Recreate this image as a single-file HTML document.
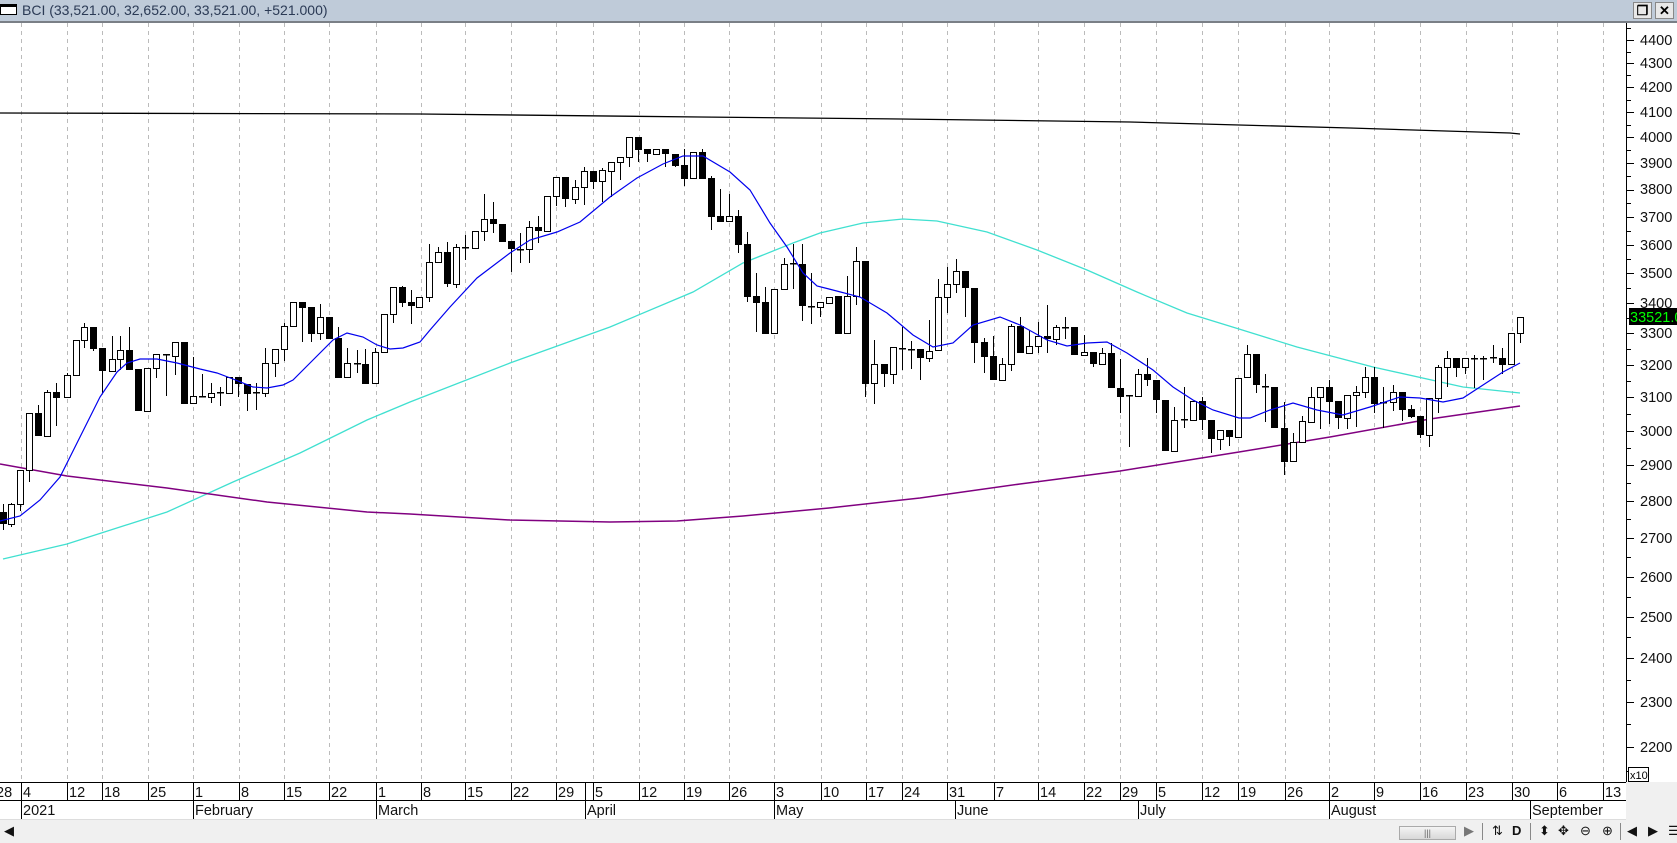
<!DOCTYPE html>
<html><head><meta charset="utf-8"><style>
html,body{margin:0;padding:0;width:1677px;height:843px;overflow:hidden;background:#fff;font-family:"Liberation Sans",Arial,sans-serif}
#title{position:absolute;left:0;top:0;width:1677px;height:21px;background:#bfcbd9;border-bottom:2px solid #7a7f86;box-sizing:content-box}
#title .t{position:absolute;left:22px;top:2px;font-size:14px;color:#2b3a55;white-space:nowrap}
#title .ic{position:absolute;left:0;top:4px;width:17px;height:11px;border:1px solid #000;border-top:3px solid #000;background:#fff;box-sizing:border-box}
.btn{position:absolute;top:2px;width:19px;height:17px;background:#e8e8e8;border:1px solid #888;box-sizing:border-box;font-size:13px;text-align:center;line-height:15px;font-weight:bold}
svg{position:absolute;left:0;top:0}
.yl{font-size:14.5px;fill:#111}
.dl{font-size:14.5px;fill:#111}
#bar{position:absolute;left:0;top:820px;width:1677px;height:23px;background:#f0f0f0}
.ico{position:absolute;top:3px;font-size:13px;color:#111}
</style></head><body>
<div id="title"><div class="ic"></div><div class="t">BCI (33,521.00, 32,652.00, 33,521.00, +521.000)</div>
<div class="btn" style="left:1633px">&#x2750;</div><div class="btn" style="left:1655px">✕</div></div>
<svg width="1677" height="843" xmlns="http://www.w3.org/2000/svg" style="top:0" id="s">
<rect x="0" y="23" width="1626" height="759" fill="#fff"/>
<g id="grid" stroke="#bbb" stroke-width="1" stroke-dasharray="4,4" shape-rendering="crispEdges"></g>
<polyline fill="none" stroke="#000" stroke-width="1.3" points="0,113 420,114 700,117 900,119 1130,122 1350,128 1510,133 1520,134"/>
<polyline fill="none" stroke="#40e0d0" stroke-width="1.3" points="3,559 67,544 167,512 233,482 300,453 367,420 410,402 510,363 610,327 693,292 743,263 793,243 820,233 863,223 903,219 937,221 987,232 1037,250 1087,270 1137,292 1187,313 1239,329 1297,347 1373,367 1463,387 1520,393"/>
<polyline fill="none" stroke="#800080" stroke-width="1.5" points="0,464 67,476 167,488 267,502 367,512 410,514 510,520 610,522 677,521 743,516 829,508 920,498 1020,484 1120,471 1239,452 1330,437 1430,419 1520,406"/>
<g id="candles" shape-rendering="crispEdges"></g>
<polyline fill="none" stroke="#0000ee" stroke-width="1.2" points="0,521 20,516 40,500 60,477 80,437 100,397 117,372 127,363 140,359 157,359 177,363 200,369 217,373 233,379 253,387 267,388 283,385 293,380 310,363 333,340 347,333 363,337 377,345 390,349 403,348 420,342 430,330 450,307 477,278 510,253 530,240 557,232 580,222 610,197 637,178 663,164 683,156 703,156 730,172 750,190 770,223 787,247 803,273 817,286 829,289 860,297 887,313 913,335 933,347 953,343 973,325 1000,317 1020,325 1047,340 1067,346 1087,343 1107,342 1127,353 1153,370 1173,387 1193,400 1213,410 1239,418 1250,418 1270,410 1293,403 1317,410 1343,415 1370,407 1400,397 1420,398 1443,402 1463,398 1483,385 1503,372 1520,363"/>
<line x1="1626.5" y1="23" x2="1626.5" y2="782" stroke="#000"/>
<g id="ticks" stroke="#000" shape-rendering="crispEdges"></g>
<g class="yl">
<text x="1640" y="45">4400</text><text x="1640" y="68">4300</text><text x="1640" y="92">4200</text><text x="1640" y="117">4100</text><text x="1640" y="142">4000</text><text x="1640" y="168">3900</text><text x="1640" y="194">3800</text><text x="1640" y="222">3700</text><text x="1640" y="250">3600</text><text x="1640" y="278">3500</text><text x="1640" y="308">3400</text><text x="1640" y="338">3300</text><text x="1640" y="370">3200</text><text x="1640" y="402">3100</text><text x="1640" y="436">3000</text><text x="1640" y="470">2900</text><text x="1640" y="506">2800</text><text x="1640" y="543">2700</text><text x="1640" y="582">2600</text><text x="1640" y="622">2500</text><text x="1640" y="663">2400</text><text x="1640" y="707">2300</text><text x="1640" y="752">2200</text>
</g>
<rect x="1629" y="308" width="48" height="17" fill="#000"/>
<text x="1630" y="322" font-size="14.5" fill="#00ff00">33521.0</text>
<rect x="1628.5" y="767.5" width="20" height="14" fill="#fff" stroke="#000"/>
<text x="1630" y="779" font-size="11" fill="#000">x10</text>
<rect x="1626" y="782" width="51" height="38" fill="#f0f0f0"/>
<line x1="0" y1="782.5" x2="1626" y2="782.5" stroke="#000"/>
<line x1="0" y1="800.5" x2="1626" y2="800.5" stroke="#000"/>
<line x1="0" y1="819.5" x2="1626" y2="819.5" stroke="#ddd"/>
<g id="dt" stroke="#000" shape-rendering="crispEdges"></g>
<g class="dl">
<text x="-4" y="797">28</text><text x="23" y="797">4</text><text x="69" y="797">12</text><text x="104" y="797">18</text><text x="150" y="797">25</text><text x="195" y="797">1</text><text x="241" y="797">8</text><text x="286" y="797">15</text><text x="331" y="797">22</text><text x="378" y="797">1</text><text x="423" y="797">8</text><text x="467" y="797">15</text><text x="513" y="797">22</text><text x="558" y="797">29</text><text x="595" y="797">5</text><text x="641" y="797">12</text><text x="686" y="797">19</text><text x="731" y="797">26</text><text x="776" y="797">3</text><text x="823" y="797">10</text><text x="868" y="797">17</text><text x="904" y="797">24</text><text x="949" y="797">31</text><text x="996" y="797">7</text><text x="1040" y="797">14</text><text x="1086" y="797">22</text><text x="1122" y="797">29</text><text x="1158" y="797">5</text><text x="1204" y="797">12</text><text x="1240" y="797">19</text><text x="1287" y="797">26</text><text x="1331" y="797">2</text><text x="1376" y="797">9</text><text x="1422" y="797">16</text><text x="1468" y="797">23</text><text x="1514" y="797">30</text><text x="1559" y="797">6</text><text x="1605" y="797">13</text>
<text x="23" y="815">2021</text><text x="195" y="815">February</text><text x="378" y="815">March</text><text x="587" y="815">April</text><text x="776" y="815">May</text><text x="957" y="815">June</text><text x="1140" y="815">July</text><text x="1331" y="815">August</text><text x="1532" y="815">September</text>
</g>
</svg>
<div id="bar">
<div class="ico" style="left:4px">◀</div>
<div style="position:absolute;left:1399px;top:6px;width:57px;height:14px;background:linear-gradient(#f4f4f4,#d8d8d8);border:1px solid #aaa;box-sizing:border-box;font-size:9px;text-align:center;line-height:12px;color:#666">|||</div>
<div class="ico" style="left:1464px;color:#777">▶</div>
<div style="position:absolute;left:1482px;top:3px;width:1px;height:17px;background:#888"></div>
<div class="ico" style="left:1492px">⇅</div>
<div class="ico" style="left:1512px;font-weight:bold">D</div>
<div style="position:absolute;left:1530px;top:3px;width:1px;height:17px;background:#888"></div>
<div class="ico" style="left:1539px">⬍</div>
<div class="ico" style="left:1558px">✥</div>
<div class="ico" style="left:1580px">⊖</div>
<div class="ico" style="left:1602px">⊕</div>
<div style="position:absolute;left:1620px;top:3px;width:1px;height:17px;background:#888"></div>
<div class="ico" style="left:1627px">◀</div>
<div class="ico" style="left:1648px">▶</div>
<div class="ico" style="left:1668px">☰</div>
</div>
<script>
var NS="http://www.w3.org/2000/svg";
function el(p,t,a){var e=document.createElementNS(NS,t);for(var k in a)e.setAttribute(k,a[k]);p.appendChild(e);return e;}
var grid=document.getElementById('grid'),dt=document.getElementById('dt');
var gx=[21,67,102,148,193,239,284,329,376,421,465,511,556,593,639,684,729,774,821,866,902,947,994,1038,1084,1120,1156,1202,1238,1285,1329,1374,1420,1466,1512,1557,1603];
gx.forEach(function(x){el(grid,'line',{x1:x+.5,y1:23,x2:x+.5,y2:782});el(dt,'line',{x1:x+.5,y1:782,x2:x+.5,y2:800});});
el(dt,'line',{x1:585.5,y1:782,x2:585.5,y2:800});
[21,193,376,585,774,955,1138,1329,1530].forEach(function(x){el(dt,'line',{x1:x+.5,y1:800,x2:x+.5,y2:819});});
var tk=document.getElementById('ticks');
for(var v=2150;v<=4450;v+=50){var y=40+(Math.log10(4400)-Math.log10(v))*2349;if(y<24||y>780)continue;var maj=(v%100==0);el(tk,'line',{x1:1626,y1:Math.round(y)+.5,x2:maj?1634:1631,y2:Math.round(y)+.5});}
var Z=[[0,100,[[8,1235,1270,1212,1290,1],[34,1213,1273,1210,1280,0],[60,1110,1213,0,1233,0],[88,940,1110,0,1145,0],[115,940,1005,915,0,1],[142,877,1007,870,0,0],[168,877,890,850,977,1],[200,826,892,820,0,0],[227,720,826,0,0,0],[253,682,720,668,745,0],[280,682,744,0,752,1],[307,745,810,0,880,1],[335,778,812,708,0,0],[361,750,778,708,810,0],[388,750,806,682,0,1],[415,808,930,0,0,1],[442,805,932,0,0,0],[468,763,805,0,833,0],[498,763,763,763,888,0],[526,727,767,0,825,0],[553,727,908,0,0,1],[580,888,910,772,0,0],[607,888,888,822,890,0],[634,880,892,850,908,0],[661,877,877,862,918,0],[688,832,880,0,0,0],[715,832,850,0,890,1],[742,852,878,0,932,1],[769,877,877,850,930,0],[795,790,880,745,890,0],[826,748,790,0,830,0],[853,678,748,668,782,0],[880,607,678,0,0,0],[907,607,620,0,725,1],[934,622,698,0,725,1],[961,652,698,612,720,0],[988,652,714,0,0,1],[1015,714,830,680,0,1],[1042,790,832,745,0,0],[1070,790,790,750,820,0],[1095,793,848,748,0,1],[1125,755,850,745,0,0],[1153,643,755,0,0,0],[1180,562,643,0,668,0],[1207,562,605,558,622,1],[1234,606,616,570,673,1],[1258,590,620,0,0,0]]],
[410,100,[[58,487,590,432,605,0],[85,457,487,442,0,0],[112,457,550,425,560,1],[139,442,553,432,563,0],[166,442,442,405,480,0],[196,392,445,0,0,0],[223,358,392,282,422,0],[250,358,370,305,400,1],[277,373,422,0,0,1],[304,423,445,0,515,1],[331,447,447,400,490,0],[358,382,448,362,490,0],[385,382,390,348,430,1],[412,287,392,0,0,0],[439,230,287,0,318,0],[464,230,295,0,320,1],[496,260,298,240,313,0],[523,213,260,200,315,0],[550,213,242,0,268,1],[577,210,244,205,305,0],[604,186,212,0,290,0],[631,172,187,0,240,0],[658,112,172,0,200,0],[685,112,146,0,187,1],[712,148,160,0,185,1],[739,148,162,0,0,0],[765,148,160,0,200,1],[796,162,194,0,200,1],[823,195,233,148,258,1],[850,157,235,0,0,0],[877,157,233,148,0,1],[904,235,348,228,390,1],[931,348,362,268,0,1],[958,348,364,282,0,0],[985,348,432,330,458,1],[1012,432,588,395,605,1],[1039,588,605,520,695,1],[1066,607,698,562,0,1],[1093,568,700,0,0,0],[1123,493,568,475,0,0],[1150,490,490,432,568,0],[1177,493,615,432,662,1],[1204,617,617,520,672,0],[1231,607,620,0,650,0],[1258,590,608,0,0,0]]],
[820,200,[[55,288,398,0,0,1],[82,287,400,228,0,0],[109,183,287,140,315,0],[136,183,548,0,590,1],[161,493,550,420,613,0],[193,493,520,0,560,1],[220,442,523,0,553,0],[247,443,443,380,510,0],[274,447,447,423,508,0],[301,446,472,0,540,1],[328,452,475,360,485,0],[355,290,450,238,0,0],[382,253,290,200,340,0],[409,212,253,178,278,0],[436,212,262,0,350,1],[463,265,425,0,488,1],[493,427,467,413,520,1],[520,468,538,408,0,1],[547,493,540,473,0,0],[574,378,493,372,512,0],[601,378,457,352,0,1],[628,438,460,390,0,0],[655,407,438,367,460,0],[682,407,415,315,460,1],[709,382,417,375,435,0],[736,380,383,352,418,1],[763,380,463,0,0,1],[793,455,465,405,0,0],[820,455,490,0,500,1],[847,458,492,445,0,0],[874,458,560,428,0,1],[901,563,587,478,638,1],[928,585,585,585,740,0],[955,523,588,507,0,0],[982,523,538,475,557,1],[1009,540,598,0,638,1],[1036,600,750,0,0,1],[1063,660,753,622,0,0],[1093,658,658,562,685,0],[1120,603,660,0,0,0],[1147,603,658,592,690,1],[1174,660,715,0,760,1],[1201,690,717,0,750,0],[1228,690,708,0,738,1],[1255,533,710,0,0,0]]],
[1230,250,[[51,312,382,285,0,0],[78,312,403,0,430,1],[105,407,407,372,517,0],[132,410,532,0,0,1],[162,535,632,455,675,1],[189,577,633,548,0,0],[216,513,577,498,0,0],[243,442,515,410,0,0],[270,412,442,0,538,0],[297,412,452,390,523,1],[324,453,502,0,538,1],[351,436,505,0,538,0],[378,427,436,408,532,0],[405,382,427,350,445,0],[432,382,458,350,488,1],[459,456,456,410,535,0],[489,427,455,405,482,0],[516,427,477,0,512,1],[543,478,497,465,505,1],[570,498,553,0,563,1],[597,445,556,0,590,0],[624,352,445,345,488,0],[651,325,352,303,410,0],[678,325,350,0,380,1],[705,325,352,0,372,0],[732,325,325,315,415,0],[759,325,328,318,390,1],[789,322,322,285,340,0],[816,325,342,295,372,1],[843,250,343,0,0,0],[870,202,250,0,278,0]]]];
var g=document.getElementById('candles');
Z.forEach(function(z){var x0=z[0],y0=z[1];z[2].forEach(function(c){
 var cx=Math.round(x0+c[0]/3),bt=Math.round(y0+c[1]/3),bb=Math.round(y0+c[2]/3);
 var wt=c[3]?Math.round(y0+c[3]/3):bt,wb=c[4]?Math.round(y0+c[4]/3):bb;
 el(g,'line',{x1:cx+.5,y1:wt,x2:cx+.5,y2:wb,stroke:'#000','stroke-width':1.4});
 if(bb-bt<2){el(g,'line',{x1:cx-3,y1:bt+.5,x2:cx+4,y2:bt+.5,stroke:'#000','stroke-width':1.5});}
 else el(g,'rect',{x:cx-2.5,y:bt+.5,width:6,height:bb-bt,fill:c[5]?'#000':'#fff',stroke:'#000','stroke-width':1.3});
});});
</script>
</body></html>
